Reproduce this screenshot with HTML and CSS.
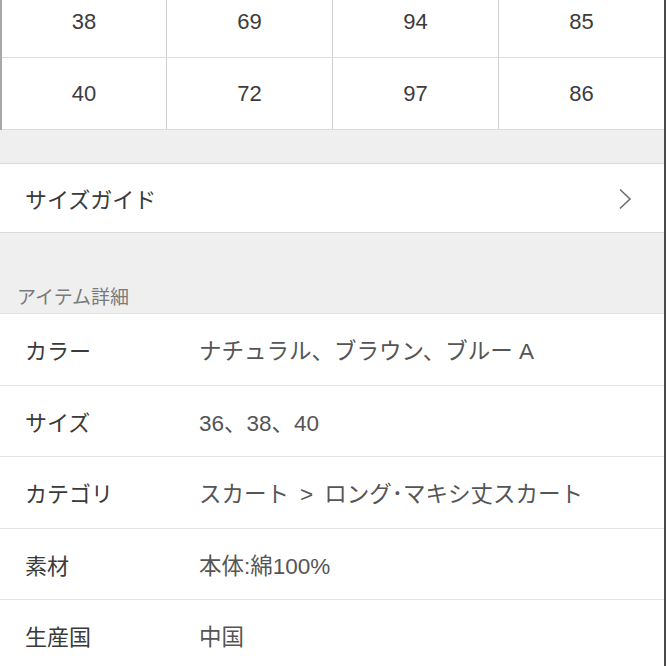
FILE: index.html
```html
<!DOCTYPE html>
<html lang="ja">
<head>
<meta charset="utf-8">
<link rel="stylesheet" href="styles.css">
</head>
<body>
<div class="page">
  <div class="size-table">
    <div class="trow">
      <div class="tcell">38</div><div class="tcell">69</div><div class="tcell">94</div><div class="tcell">85</div>
    </div>
    <div class="trow">
      <div class="tcell">40</div><div class="tcell">72</div><div class="tcell">97</div><div class="tcell">86</div>
    </div>
  </div>
  <div class="gap-small"></div>
  <div class="guide-row">
    <span class="guide-label">サイズガイド</span>
    <svg class="chev" width="14" height="22" viewBox="0 0 14 22"><path d="M2 1.5 L12 11 L2 20.5" fill="none" stroke="#6e6e6e" stroke-width="1.6"/></svg>
  </div>
  <div class="section-head">アイテム詳細</div>
  <div class="details">
    <div class="drow"><div class="dlabel">カラー</div><div class="dvalue">ナチュラル、ブラウン、ブルー A</div></div>
    <div class="drow"><div class="dlabel">サイズ</div><div class="dvalue">36、38、40</div></div>
    <div class="drow"><div class="dlabel">カテゴリ</div><div class="dvalue">スカート<span class="sep">&gt;</span>ロング･マキシ丈スカート</div></div>
    <div class="drow"><div class="dlabel">素材</div><div class="dvalue">本体:綿100%</div></div>
    <div class="drow"><div class="dlabel">生産国</div><div class="dvalue">中国</div></div>
  </div>
</div>
</body>
</html>
```

FILE: styles.css
```css
html, body {
  margin: 0;
  padding: 0;
  background: #ffffff;
  overflow: hidden;
}
.page {
  width: 666px;
  height: 666px;
  box-sizing: border-box;
  border-right: 2px solid #4a4a4a;
  background: #efefef;
  font-family: "Liberation Sans", "Noto Sans CJK JP", sans-serif;
  overflow: hidden;
}
.size-table {
  margin-top: -14px;
  background: #fff;
  border-left: 2px solid #a8a8a8;
}
.trow {
  display: grid;
  grid-template-columns: 165px 166px 166px 1fr;
  height: 71px;
  border-bottom: 1px solid #dcdcdc;
}
.tcell {
  display: flex;
  align-items: center;
  justify-content: center;
  font-size: 22px;
  color: #3c3c3c;
  border-right: 1px solid #cfcfcf;
}
.tcell:last-child {
  border-right: none;
}
.gap-small {
  height: 33px;
  border-bottom: 1px solid #dadada;
}
.guide-row {
  height: 68px;
  background: #fff;
  display: flex;
  align-items: center;
  justify-content: space-between;
  padding: 0 32px 0 25px;
  border-bottom: 1px solid #dadada;
}
.guide-label {
  font-family: "Noto Sans CJK JP", sans-serif;
  font-size: 22px;
  color: #3a3a3a;
}
.chev {
  display: block;
  margin-top: 2px;
}
.section-head {
  height: 81px;
  box-sizing: border-box;
  display: flex;
  align-items: flex-end;
  padding: 0 0 4px 17px;
  font-family: "Noto Sans CJK JP", sans-serif;
  font-size: 19px;
  color: #7a7a7a;
  border-bottom: 1px solid #e2e2e2;
}
.details {
  background: #fff;
}
.drow {
  display: flex;
  align-items: center;
  height: 71.5px;
  box-sizing: border-box;
  border-bottom: 1px solid #e4e4e4;
  padding-left: 25px;
}
.dlabel {
  width: 174px;
  flex: none;
  font-family: "Noto Sans CJK JP", sans-serif;
  font-size: 22px;
  color: #3a3a3a;
}
.dvalue {
  font-family: "Liberation Sans", "Noto Sans CJK JP", sans-serif;
  font-size: 22.5px;
  color: #555555;
}
.sep {
  margin: 0 11px;
}
```
